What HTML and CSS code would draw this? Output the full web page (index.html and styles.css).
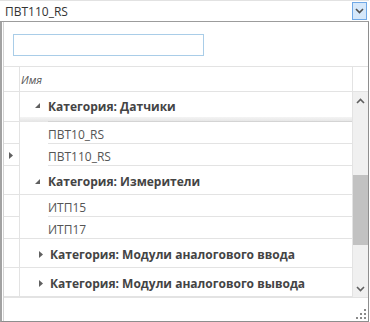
FILE: index.html
```html
<!DOCTYPE html>
<html lang="ru">
<head>
  <meta charset="UTF-8">
  <title>Выбор устройства</title>
  <link rel="stylesheet" href="styles.css">
</head>
<body>
  <div class="combo">
    <span class="combo-text">ПВТ110_RS</span>
    <span class="combo-btn">
      <svg width="9" height="6" viewBox="0 0 9 6"><path d="M1 1 L4.5 4.5 L8 1" fill="none" stroke="#505050" stroke-width="1.6"/></svg>
    </span>
  </div>

  <div class="popup">
    <div class="popup-inner">
      <div class="search">
        <input type="text" class="search-box">
      </div>

      <div class="grid">
        <div class="grid-head">
          <div class="rh"></div>
          <div class="hdr">Имя</div>
          <div class="corner"></div>
        </div>

        <div class="grid-body">
          <div class="rows">
            <div class="row group first">
              <div class="rh"></div>
              <div class="cell">
                <svg class="exp" width="6" height="6" viewBox="0 0 6 6"><polygon points="5,0 5,5 0,5" fill="#606060"/></svg>
                Категория: Датчики
              </div>
            </div>
            <div class="peek">
              <div class="rh"></div>
              <div class="cell"><div class="peek-line"></div></div>
            </div>
            <div class="row item">
              <div class="rh"></div>
              <div class="cell"><span class="item-text">ПВТ10_RS</span></div>
            </div>
            <div class="row item">
              <div class="rh">
                <svg width="5" height="7" viewBox="0 0 5 7"><polygon points="0,0 4,3.5 0,7" fill="#606060"/></svg>
              </div>
              <div class="cell"><span class="item-text">ПВТ110_RS</span></div>
            </div>
            <div class="row group">
              <div class="rh"></div>
              <div class="cell">
                <svg class="exp" width="6" height="6" viewBox="0 0 6 6"><polygon points="5,0 5,5 0,5" fill="#606060"/></svg>
                Категория: Измерители
              </div>
            </div>
            <div class="row item">
              <div class="rh"></div>
              <div class="cell"><span class="item-text">ИТП15</span></div>
            </div>
            <div class="row item last">
              <div class="rh"></div>
              <div class="cell"><span class="item-text">ИТП17</span></div>
            </div>
            <div class="row group">
              <div class="rh"></div>
              <div class="cell">
                <svg class="col" width="5" height="7" viewBox="0 0 5 7"><polygon points="0,0 4,3.5 0,7" fill="#606060"/></svg>
                Категория: Модули аналогового ввода
              </div>
            </div>
            <div class="row group">
              <div class="rh"></div>
              <div class="cell">
                <svg class="col" width="5" height="7" viewBox="0 0 5 7"><polygon points="0,0 4,3.5 0,7" fill="#606060"/></svg>
                Категория: Модули аналогового вывода
              </div>
            </div>
          </div>

          <div class="vscroll">
            <div class="arrow">
              <svg width="9" height="6" viewBox="0 0 9 6"><path d="M1 5 L4.5 1.5 L8 5" fill="none" stroke="#606060" stroke-width="1.6"/></svg>
            </div>
            <div class="track">
              <div class="thumb"></div>
            </div>
            <div class="arrow">
              <svg width="9" height="6" viewBox="0 0 9 6"><path d="M1 1 L4.5 4.5 L8 1" fill="none" stroke="#606060" stroke-width="1.6"/></svg>
            </div>
          </div>
        </div>
      </div>

      <div class="footer">
        <svg width="10" height="10" viewBox="0 0 10 10" fill="#8a8a8a">
          <rect x="8" y="0" width="2" height="2"/>
          <rect x="4" y="4" width="2" height="2"/><rect x="8" y="4" width="2" height="2"/>
          <rect x="0" y="8" width="2" height="2"/><rect x="4" y="8" width="2" height="2"/><rect x="8" y="8" width="2" height="2"/>
        </svg>
      </div>
    </div>
  </div>
</body>
</html>
```

FILE: styles.css
```css
body {
  margin: 0;
  width: 370px;
  height: 322px;
  overflow: hidden;
  background: #ffffff;
  font-family: "Open Sans", "Noto Sans", Arial, sans-serif;
  font-size: 12px;
  color: #444444;
}

.combo {
  box-sizing: border-box;
  height: 22px;
  width: 369px;
  border-top: 1px solid #e2e2e2;
  border-bottom: 1px solid #9c9c9c;
  display: flex;
  align-items: center;
  justify-content: space-between;
  padding-left: 5px;
  padding-right: 2px;
}

.combo-text {
  color: #333333;
}

.combo-btn {
  box-sizing: border-box;
  width: 15px;
  height: 18px;
  border: 1px solid #6fa8e6;
  background: #d6e8fa;
  display: flex;
  align-items: center;
  justify-content: center;
}

.popup {
  box-sizing: border-box;
  width: 369px;
  height: 300px;
  border-left: 2px solid #a2a2a2;
  border-right: 1px solid #8e8e8e;
  border-bottom: 1px solid #8e8e8e;
  padding-left: 1px;
}

.popup-inner {
  height: 100%;
  border-left: 1px solid #d4d4d4;
  display: flex;
  flex-direction: column;
}

.search {
  padding: 12px 0 10px 9px;
}

.search-box {
  box-sizing: border-box;
  width: 191px;
  height: 22px;
  margin: 0;
  border: 1px solid #a9cde8;
  outline: none;
}

.grid {
  border-top: 1px solid #e3e3e3;
  display: flex;
  flex-direction: column;
}

.grid-head {
  display: flex;
  height: 24px;
  border-bottom: 1px solid #e3e3e3;
}

.rh {
  box-sizing: border-box;
  width: 16px;
  flex: 0 0 16px;
  border-right: 1px solid #e3e3e3;
  display: flex;
  align-items: center;
  justify-content: center;
}

.hdr {
  flex: 1;
  display: flex;
  align-items: center;
  padding-left: 1px;
  padding-top: 1px;
  font-style: italic;
  font-size: 11px;
  color: #555555;
}

.corner {
  width: 15px;
  border-left: 1px solid #e3e3e3;
}

.grid-body {
  display: flex;
  border-bottom: 1px solid #e3e3e3;
}

.rows {
  flex: 1;
  display: flex;
  flex-direction: column;
}

.row {
  display: flex;
}

.row .cell {
  flex: 1;
  display: flex;
  align-items: center;
  padding-top: 3px;
}

.row .rh {
  border-bottom: 1px solid #e3e3e3;
  padding-top: 2px;
}

.group {
  height: 29px;
}

.group .cell {
  border-bottom: 1px solid #e3e3e3;
  font-weight: bold;
  color: #444444;
  padding-left: 15px;
}

.group.first {
  height: 25px;
}

.group.first .cell,
.group.first .rh {
  border-bottom: none;
}

.exp {
  margin-right: 7px;
}

.col {
  margin-left: 4px;
  margin-right: 6px;
}

.peek {
  display: flex;
  height: 5px;
}

.peek .cell {
  flex: 1;
  background: linear-gradient(#f4f4f4, #e4e4e4);
  padding-left: 28px;
  display: flex;
  align-items: flex-end;
}

.peek .rh {
  border-bottom: 1px solid #e3e3e3;
}

.peek-line {
  flex: 1;
  height: 1px;
  background: #d4d4d4;
}

.item {
  height: 22px;
}

.item .cell {
  margin-left: 28px;
  border-bottom: 1px solid #e3e3e3;
  color: #555555;
}

.item.last .cell {
  margin-left: 0;
  padding-left: 28px;
}

.vscroll {
  width: 15px;
  border-left: 1px solid #e3e3e3;
  background: #f0f0f0;
  display: flex;
  flex-direction: column;
}

.arrow {
  height: 17px;
  display: flex;
  align-items: center;
  justify-content: center;
}

.track {
  flex: 1;
  padding-top: 66px;
}

.thumb {
  height: 70px;
  background: #c2c2c2;
}

.footer {
  flex: 1;
  display: flex;
  justify-content: flex-end;
  align-items: flex-end;
  padding: 0 2px 2px 0;
}
```
